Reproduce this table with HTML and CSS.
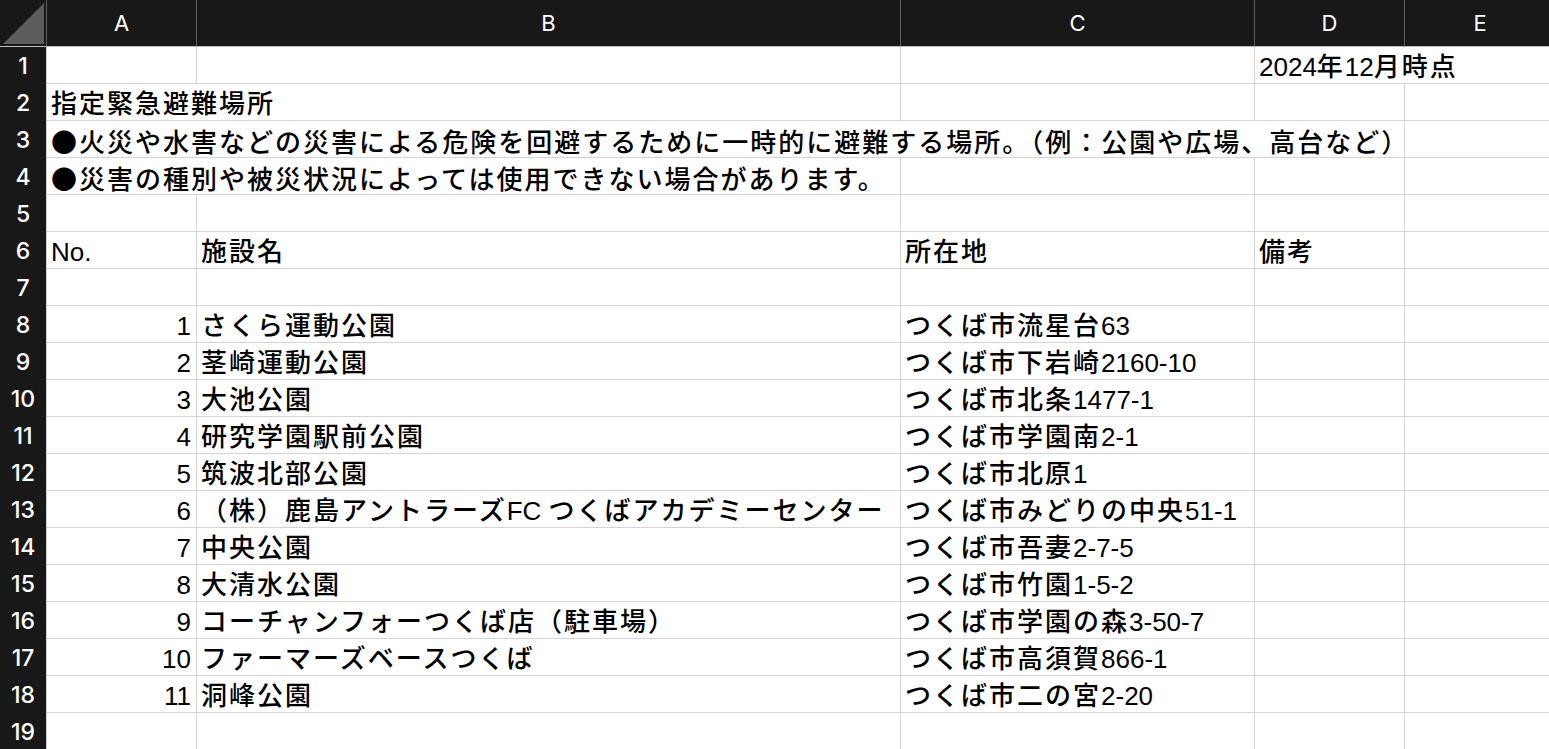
FILE: index.html
```html
<!DOCTYPE html>
<html lang="ja">
<head>
<meta charset="utf-8">
<link rel="stylesheet" href="styles.css">
</head>
<body>
<div class="sheet">
  <div class="row head">
    <div class="corner"><svg width="46" height="46" viewBox="0 0 46 46"><polygon points="3,44 44,3 44,44" fill="#5c5c5c"/></svg></div>
    <div class="colh">A</div>
    <div class="colh">B</div>
    <div class="colh">C</div>
    <div class="colh">D</div>
    <div class="colh">E</div>
  </div>
  <div class="row">
    <div class="rh">1</div>
    <div class="c"></div><div class="c"></div><div class="c"></div>
    <div class="c s2"><span class="n">2024</span>年<span class="n">12</span>月時点</div>
  </div>
  <div class="row">
    <div class="rh">2</div>
    <div class="c s2">指定緊急避難場所</div>
    <div class="c"></div><div class="c"></div><div class="c"></div>
  </div>
  <div class="row">
    <div class="rh">3</div>
    <div class="c s4"><span class="cj">●</span>火災や水害などの災害による危険を回避するために一時的に避難する場所。（例：公園や広場、高台など）</div>
    <div class="c"></div>
  </div>
  <div class="row">
    <div class="rh">4</div>
    <div class="c s2"><span class="cj">●</span>災害の種別や被災状況によっては使用できない場合があります。</div>
    <div class="c"></div><div class="c"></div><div class="c"></div>
  </div>
  <div class="row">
    <div class="rh">5</div>
    <div class="c"></div><div class="c"></div><div class="c"></div><div class="c"></div><div class="c"></div>
  </div>
  <div class="row">
    <div class="rh">6</div>
    <div class="c"><span class="n">No.</span></div><div class="c">施設名</div><div class="c">所在地</div><div class="c">備考</div><div class="c"></div>
  </div>
  <div class="row">
    <div class="rh">7</div>
    <div class="c"></div><div class="c"></div><div class="c"></div><div class="c"></div><div class="c"></div>
  </div>
  <div class="row">
    <div class="rh">8</div>
    <div class="c num">1</div><div class="c">さくら運動公園</div><div class="c">つくば市流星台<span class="n">63</span></div><div class="c"></div><div class="c"></div>
  </div>
  <div class="row">
    <div class="rh">9</div>
    <div class="c num">2</div><div class="c">茎崎運動公園</div><div class="c">つくば市下岩崎<span class="n">2160-10</span></div><div class="c"></div><div class="c"></div>
  </div>
  <div class="row">
    <div class="rh">10</div>
    <div class="c num">3</div><div class="c">大池公園</div><div class="c">つくば市北条<span class="n">1477-1</span></div><div class="c"></div><div class="c"></div>
  </div>
  <div class="row">
    <div class="rh">11</div>
    <div class="c num">4</div><div class="c">研究学園駅前公園</div><div class="c">つくば市学園南<span class="n">2-1</span></div><div class="c"></div><div class="c"></div>
  </div>
  <div class="row">
    <div class="rh">12</div>
    <div class="c num">5</div><div class="c">筑波北部公園</div><div class="c">つくば市北原<span class="n">1</span></div><div class="c"></div><div class="c"></div>
  </div>
  <div class="row">
    <div class="rh">13</div>
    <div class="c num">6</div><div class="c">（株）鹿島アントラーズ<span class="n">FC </span>つくばアカデミーセンター</div><div class="c">つくば市みどりの中央<span class="n">51-1</span></div><div class="c"></div><div class="c"></div>
  </div>
  <div class="row">
    <div class="rh">14</div>
    <div class="c num">7</div><div class="c">中央公園</div><div class="c">つくば市吾妻<span class="n">2-7-5</span></div><div class="c"></div><div class="c"></div>
  </div>
  <div class="row">
    <div class="rh">15</div>
    <div class="c num">8</div><div class="c">大清水公園</div><div class="c">つくば市竹園<span class="n">1-5-2</span></div><div class="c"></div><div class="c"></div>
  </div>
  <div class="row">
    <div class="rh">16</div>
    <div class="c num">9</div><div class="c">コーチャンフォーつくば店（駐車場）</div><div class="c">つくば市学園の森<span class="n">3-50-7</span></div><div class="c"></div><div class="c"></div>
  </div>
  <div class="row">
    <div class="rh">17</div>
    <div class="c num">10</div><div class="c">ファーマーズベースつくば</div><div class="c">つくば市高須賀<span class="n">866-1</span></div><div class="c"></div><div class="c"></div>
  </div>
  <div class="row">
    <div class="rh">18</div>
    <div class="c num">11</div><div class="c">洞峰公園</div><div class="c">つくば市二の宮<span class="n">2-20</span></div><div class="c"></div><div class="c"></div>
  </div>
  <div class="row">
    <div class="rh">19</div>
    <div class="c"></div><div class="c"></div><div class="c"></div><div class="c"></div><div class="c"></div>
  </div>
</div>
</body>
</html>
```
FILE: styles.css
```css
html, body {
  margin: 0;
  padding: 0;
  background: #ffffff;
  overflow: hidden;
}
.sheet {
  width: 1556px;
}
.row {
  display: grid;
  grid-template-columns: 47px 150px 704px 354px 150px 151px;
  grid-template-rows: 37px;
  height: 37px;
}
.row.head {
  grid-template-rows: 47px;
  height: 47px;
}
.corner {
  background: #181818;
  border-right: 1px solid #5e5e5e;
  border-bottom: 1px solid #bdbdbd;
  box-sizing: border-box;
  line-height: 0;
}
.corner svg {
  display: block;
}
.colh {
  background: #181818;
  color: #ffffff;
  border-right: 1px solid #5e5e5e;
  border-bottom: 1px solid #bdbdbd;
  box-sizing: border-box;
  display: flex;
  align-items: center;
  justify-content: center;
  font-family: "Inter", "Liberation Sans", sans-serif;
  font-size: 22px;
}
.rh {
  background: #181818;
  color: #ffffff;
  border-right: 1px solid #d4d4d4;
  box-sizing: border-box;
  display: flex;
  align-items: center;
  justify-content: center;
  padding-top: 1px;
  font-family: "Inter", "Liberation Sans", sans-serif;
  font-weight: 500;
  font-size: 23px;
}
.c {
  border-right: 1px solid #d4d4d4;
  border-bottom: 1px solid #d4d4d4;
  box-sizing: border-box;
  height: 37px;
  padding: 2px 5px 0 4px;
  white-space: nowrap;
  overflow: visible;
  font-family: "Liberation Sans", "Noto Sans CJK JP", sans-serif;
  font-size: 26px;
  font-weight: 500;
  letter-spacing: 2px;
  line-height: 36px;
  color: #000000;
}
.c .n {
  letter-spacing: 0;
}
.c .cj {
  font-family: "Noto Sans CJK JP", sans-serif;
}
.c.num {
  text-align: right;
  letter-spacing: 0;
}
.s2 {
  grid-column: span 2;
}
.s4 {
  grid-column: span 4;
}
```
